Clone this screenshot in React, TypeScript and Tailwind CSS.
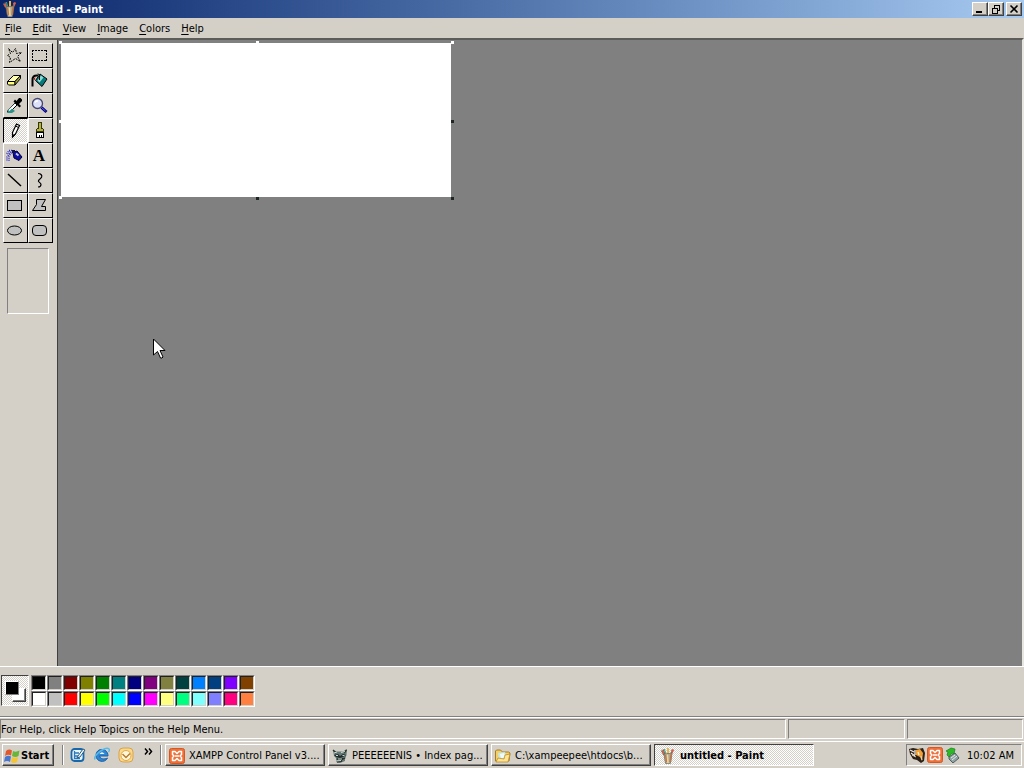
import type { ReactNode } from 'react';

const raised =
  'border border-t-white border-l-white border-r-[#404040] border-b-[#404040] shadow-[inset_-1px_-1px_0_#808080]';
const sunken = 'border border-t-[#808080] border-l-[#808080] border-r-white border-b-white';
const dither =
  'bg-[repeating-conic-gradient(#ffffff_0_25%,#d4d0c8_0_50%)] bg-[length:2px_2px]';

function Glyph({ size = 16, children }: { size?: number; children: ReactNode }) {
  return (
    <svg width={size} height={size} viewBox={`0 0 ${size} ${size}`} className="shrink-0" aria-hidden="true">
      {children}
    </svg>
  );
}

function PaintIcon() {
  return (
    <Glyph>
      <path d="M4 7 1.500 2.500M3 1.500 5.500 8M8 8V1M10 8l3-6" fill="none" stroke="#7c6a58" strokeWidth="1.500" />
      <path d="M2 3h2v3H3zM11 2l2-1 1 1-2 4z" fill="#d8604c" />
      <path d="M7 0h2v6H7z" fill="#e8b84c" />
      <path d="M4 1h1l1 4-1 1z" fill="#4aa08c" />
      <path d="M4 6l8-1-1 8-1 3H6l-1-3z" fill="#b0a890" stroke="#6c6454" strokeWidth="0.700" />
      <path d="M5.500 7l1 7M11 6l-1 8" stroke="#c87444" strokeWidth="1.300" />
      <path d="M7.500 6.500 8 15" stroke="#e8d8a0" strokeWidth="1.500" />
    </Glyph>
  );
}

const black = { fill: 'none', stroke: '#000', strokeWidth: 1 };

const tools: { name: string; icon: ReactNode }[] = [
  {
    name: 'Free-Form Select',
    icon: <path d="M2.500 1.500l4 4 3-4 1 5 5-1-4 4 3 5-5-3-6 4 1-5-3-2 3-2z" {...black} strokeDasharray="2 1" />,
  },
  {
    name: 'Select',
    icon: <path d="M1 3.500h15M1 13.500h15M1.500 3v11M15.500 3v11" {...black} strokeDasharray="2 1" shapeRendering="crispEdges" />,
  },
  {
    name: 'Eraser',
    icon: (
      <g stroke="#000" strokeLinejoin="round">
        <path d="M1.500 9.500 7.500 3.500h7L9 9.500z" fill="#ffffb0" />
        <path d="M1.500 9.500H9V13H2.500L1.500 12z" fill="#ffff80" />
        <path d="M9 9.500l5.500-6v3L9 13z" fill="#aaa640" />
      </g>
    ),
  },
  {
    name: 'Fill With Color',
    icon: (
      <g>
        <path d="M4.500 8.500 9 2l7 5-5 7.500z" fill="#067b7b" stroke="#000" />
        <path d="M6.500 8.500l3.500-5 2.500 2-4 5z" fill="#8dd9d3" />
        <path d="M8.500 8V3.500L7 1.500" fill="none" stroke="#000" />
        <path d="M7 3.500C3 3 1 5 1.500 9v5.500" fill="none" stroke="#000" strokeWidth="2" />
        <path d="M4 5.500 3 8" stroke="#a80000" />
      </g>
    ),
  },
  {
    name: 'Pick Color',
    icon: (
      <g>
        <path d="M2 13.500 9 6l2 2-7 7H1.500z" fill="#e8ffff" stroke="#000" />
        <path d="M1 16l2-4 2-1 4 3-3 2z" fill="#2c9088" />
        <path d="M3 13.500 9.500 7" stroke="#fff" strokeWidth="1.500" />
        <path d="M7.500 4.500l6 6 1.500-1.500-2-2L16 4V2.500L14.500 1H13l-2.500 3-1.500-1.500z" fill="#000" />
      </g>
    ),
  },
  {
    name: 'Magnifier',
    icon: (
      <g>
        <circle cx="6.500" cy="6.500" r="5" fill="#dce0f8" stroke="#444470" strokeWidth="1.300" />
        <path d="M4 5.500 5.500 4H7" fill="none" stroke="#fff" strokeWidth="1.500" />
        <path d="M10.500 10.500l5 4.500" stroke="#000080" strokeWidth="3" />
        <path d="M10.500 10.500l4 3.500" stroke="#6868f4" />
      </g>
    ),
  },
  {
    name: 'Pencil',
    icon: (
      <g>
        <path d="M6.500 10.500 10.500 2l3 1.500-4 8.500-3 3z" fill="#fff" stroke="#000" strokeWidth="1.200" />
        <path d="M9.500 4l3 1.500M6.500 10v5l3-3" fill="none" stroke="#000" />
        <path d="M6 12v4l3-3z" fill="#000" />
      </g>
    ),
  },
  {
    name: 'Brush',
    icon: (
      <g shapeRendering="crispEdges">
        <path d="M7 0h4v6h1v1h1v3H5V7h1V6h1z" fill="#34340c" />
        <path d="M8 1h2v6h2v2H6V7h2z" fill="#b4b43c" />
        <path d="M5 10h8v6H5z" fill="#000" />
        <path d="M6 11h6v4h-1v-2h-1v2H9v-2H8v2H6z" fill="#fff" />
      </g>
    ),
  },
  {
    name: 'Airbrush',
    icon: (
      <g>
        <path d="M7 5.500 11 4l5 6-3 3.500-5-2.500z" fill="#1010a0" stroke="#000040" />
        <path d="M10 6.500l2.500 2" stroke="#c4ccff" strokeWidth="1.800" />
        <path d="M6 3h3v3H6z" fill="#151550" />
        <path d="M6 3.500H3L.5 7M5.500 5.500 3 9v5M4.500 4.500 1 10v4" fill="none" stroke="#3030c8" strokeDasharray="1 1" strokeWidth="1.500" />
      </g>
    ),
  },
  {
    name: 'Text',
    icon: (
      <text x="8" y="14" textAnchor="middle" className="font-['Liberation_Serif',serif] text-[17px] font-bold">
        A
      </text>
    ),
  },
  { name: 'Line', icon: <path d="M2 2l13 12" {...black} strokeWidth={1.5} /> },
  {
    name: 'Curve',
    icon: <path d="M7 1.500c3 0 4.500 2 3.500 4L7.500 8.500c-1 1.500 2.500 2 2.500 4s-1 2.500-3 2.500" {...black} strokeWidth={1.2} />,
  },
  { name: 'Rectangle', icon: <path d="M1.500 3.500h14v10h-14z" {...black} fill="#c0c0c0" shapeRendering="crispEdges" /> },
  { name: 'Polygon', icon: <path d="M5.500 2.500h9L10.500 9.500h4v4H1.500L5.500 7.500z" {...black} fill="#c0c0c0" /> },
  { name: 'Ellipse', icon: <ellipse cx="8.500" cy="8.500" rx="7" ry="4.500" {...black} fill="#c0c0c0" /> },
  { name: 'Rounded Rectangle', icon: <rect x="1.500" y="3.500" width="14" height="10" rx="3.500" {...black} fill="#c0c0c0" /> },
];

const swatches = [
  ['bg-black', 'bg-[#808080]', 'bg-[#800000]', 'bg-[#808000]', 'bg-[#008000]', 'bg-[#008080]', 'bg-[#000080]', 'bg-[#800080]', 'bg-[#808040]', 'bg-[#004040]', 'bg-[#0080ff]', 'bg-[#004080]', 'bg-[#8000ff]', 'bg-[#804000]'],
  ['bg-white', 'bg-[#c0c0c0]', 'bg-[#ff0000]', 'bg-[#ffff00]', 'bg-[#00ff00]', 'bg-[#00ffff]', 'bg-[#0000ff]', 'bg-[#ff00ff]', 'bg-[#ffff80]', 'bg-[#00ff80]', 'bg-[#80ffff]', 'bg-[#8080ff]', 'bg-[#ff0080]', 'bg-[#ff8040]'],
];

const handles = [
  '-left-0.5 -top-0.5 bg-white',
  'left-1/2 -top-0.5 bg-white',
  '-right-[3px] -top-0.5 bg-white',
  '-left-0.5 top-1/2 bg-white',
  '-right-[3px] top-1/2 bg-[#1c2424]',
  '-left-0.5 -bottom-0.5 bg-white',
  'left-1/2 -bottom-[3px] bg-[#1c2424]',
  '-right-[3px] -bottom-[3px] bg-[#1c2424]',
];

function XamppIcon() {
  return (
    <Glyph>
      <rect x=".5" y=".5" width="15" height="15" rx="2" fill="#f0703a" stroke="#d45820" />
      <path
        d="M4 3.500h2l2 2 2-2h2.500v3L11 8l1.500 1.500v3H10l-2-2-2 2H3.500v-3L5 8 3.500 6.500v-3zM6 8h4"
        fill="none"
        stroke="#fff"
        strokeWidth="1.500"
        strokeLinejoin="round"
      />
    </Glyph>
  );
}

function RaccoonIcon() {
  return (
    <Glyph>
      <path d="M1 2l4 1.500h6L15 1l-.5 6-1.500 4v2l-5 2-4-1v-4L2 8z" fill="#647876" />
      <path d="M1 2l3 3M14.500 2 12 5M5 11l4 1 4-2M5 14l5-1" stroke="#26332f" strokeWidth="1.300" />
      <path d="M2 7l4-1 2 2 3-2 3 1-3 2-3 1-4-1z" fill="#202c2a" />
      <path d="M4 7.500h2M10.500 7.500h2M2 5l3-1M9 4.500l4-1M6 11h4M4 13l5-.5" stroke="#cbd9d3" />
    </Glyph>
  );
}

function FolderIcon() {
  return (
    <Glyph>
      <path d="M.5 13V3l1-1h4l2 2h6l1.500 1-1 8z" fill="#f3cf65" stroke="#a87c22" />
      <path d="M3 5l7-1 2 8H4z" fill="#c4e8e8" />
      <path d="M5 6l4-1 1 4-4 2z" fill="#f0fbf7" />
      <path d="M1 14 3 10l6 1 1-4 5-1-2 8z" fill="#ffe391" stroke="#ba8b2a" strokeWidth=".8" />
    </Glyph>
  );
}

const tasks = [
  { title: 'XAMPP Control Panel v3....', icon: <XamppIcon />, active: false },
  { title: 'PEEEEEENIS • Index pag...', icon: <RaccoonIcon />, active: false },
  { title: 'C:\\xampeepee\\htdocs\\b...', icon: <FolderIcon />, active: false },
  { title: 'untitled - Paint', icon: <PaintIcon />, active: true },
];

function TitleBar() {
  const button = `flex h-3.5 w-4 items-center justify-center bg-[#d4d0c8] ${raised}`;
  return (
    <header className="flex h-[18px] items-center bg-linear-to-r from-[#0a246a] to-[#a6caf0] px-0.5 text-white">
      <PaintIcon />
      <h1 className="ml-px grow pt-px font-bold">untitled - Paint</h1>
      <button aria-label="Minimize" className={button}>
        <Glyph size={10}><path d="M1 8h6" stroke="#000" strokeWidth="2" /></Glyph>
      </button>
      <button aria-label="Restore" className={button}>
        <Glyph size={10}>
          <path d="M3 1.500h6M3.500 1v3M8.500 1v5.500H6M1 4.500h6M1.500 4v5h5V4" {...black} shapeRendering="crispEdges" />
          <path d="M3 1h6M1 4h6" {...black} shapeRendering="crispEdges" />
        </Glyph>
      </button>
      <button aria-label="Close" className={`${button} ml-0.5`}>
        <Glyph size={10}><path d="M1.500 1.500l7 7M8.500 1.500l-7 7" stroke="#000" strokeWidth="1.600" /></Glyph>
      </button>
    </header>
  );
}

function MenuBar() {
  return (
    <nav className="flex h-5 items-center gap-[11px] pt-0.5 pl-[5px]">
      {['File', 'Edit', 'View', 'Image', 'Colors', 'Help'].map((item) => (
        <button key={item}>
          <span className="underline underline-offset-2">{item[0]}</span>
          {item.slice(1)}
        </button>
      ))}
    </nav>
  );
}

function ToolBox() {
  return (
    <aside className="w-[57px] shrink-0 pt-[3px] pl-[3px]">
      <div className="grid w-[50px] grid-cols-2">
        {tools.map(({ name, icon }) => (
          <button
            key={name}
            aria-label={name}
            className={
              name === 'Pencil'
                ? `flex h-[25px] items-center border border-t-black border-l-black border-r-white border-b-white pl-0.5 ${dither}`
                : 'flex h-[25px] items-center border border-t-white border-l-white border-r-black border-b-black pl-0.5'
            }
          >
            <Glyph size={17}>{icon}</Glyph>
          </button>
        ))}
      </div>
      <div className={`mt-[5px] ml-1 h-[66px] w-[42px] ${sunken}`} />
    </aside>
  );
}

function Workspace() {
  return (
    <main className="relative grow border-l border-[#404040] bg-[#808080] pt-[3px] pl-[3px]">
      <div className="relative h-[154px] w-[390px] bg-white">
        {handles.map((place) => (
          <span key={place} className={`absolute size-[3px] ${place}`} />
        ))}
      </div>
      <svg width="13" height="22" viewBox="0 0 13 22" className="absolute top-[298px] left-[95px]" aria-hidden="true">
        <path d="M.5 1v16l4-3.500L7.500 20h1.500l1-1L7 12.500h5z" fill="#fff" stroke="#000" />
      </svg>
    </main>
  );
}

function Palette() {
  return (
    <section aria-label="Colors" className="flex h-[50px] gap-0.5 border-t border-white pt-2 pl-px">
      <div className={`relative h-[31px] w-7 border border-t-[#404040] border-l-[#404040] border-r-white border-b-white ${dither}`}>
        <span className={`absolute top-3 left-2.5 size-3.5 bg-white ${raised}`} />
        <span className="absolute top-[5px] left-[3px] size-3.5 border border-t-white border-l-white border-r-[#808080] border-b-[#808080] bg-black" />
      </div>
      <div className="flex flex-col">
        {swatches.map((row, r) => (
          <div key={r} className="flex">
            {row.map((color) => (
              <button key={color} aria-label={color.slice(3)} className="size-4 border border-t-[#808080] border-l-[#808080] border-r-white border-b-white">
                <span className={`block size-3.5 border border-t-[#202020] border-l-[#202020] border-r-[#d4d0c8] border-b-[#d4d0c8] ${color}`} />
              </button>
            ))}
          </div>
        ))}
      </div>
    </section>
  );
}

function StatusBar() {
  return (
    <footer className="flex h-6 gap-0.5 border-t border-white pt-px pr-px pb-0.5">
      <p className={`flex grow items-center pt-0.5 ${sunken}`}>For Help, click Help Topics on the Help Menu.</p>
      <p className={`w-[117px] ${sunken}`} />
      <p className={`w-[116px] ${sunken}`} />
    </footer>
  );
}

function Divider() {
  return <span className="h-5 w-0.5 border-l border-l-[#808080] border-r border-r-white" />;
}

function TaskBar() {
  return (
    <nav aria-label="Taskbar" className="flex h-[27px] items-center border-t border-white px-0.5">
      <button className={`flex h-[22px] w-[52px] items-center gap-px pt-px pl-px font-bold ${raised}`}>
        <Glyph>
          <path d="M2 3q3-2.500 6-.5L7 7.500q-3-1.500-6 .5z" fill="#e0582c" />
          <path d="M9 3q3 1.500 6.500-.5L14.500 8q-3 2-6.500 0z" fill="#69b53c" />
          <path d="M1 9q3-2 6-.5l-1 5.500q-3-2-6 0z" fill="#4976d0" />
          <path d="M8 9q3 1.500 6 0l-1 5q-3 2-6 0z" fill="#f4c435" />
        </Glyph>
        Start
      </button>
      <div className="ml-2 flex w-[98px] items-center gap-2">
        <Divider />
        <button aria-label="Show Desktop" className="-ml-0.5">
          <Glyph>
            <rect x="1.500" y="2" width="12" height="12" rx="3" fill="#eaf5fc" stroke="#1868ab" strokeWidth="1.800" />
            <path d="M4 6h5M4 9h5M4 11.500h6M4.500 4v8" fill="none" stroke="#2d79b8" strokeWidth="1.300" />
            <path d="M8 9l5-7 2 1-5 7-3 1z" fill="#f0f8fb" stroke="#285d83" />
          </Glyph>
        </button>
        <button aria-label="Internet Explorer">
          <Glyph>
            <path d="M14 9H5.500c1 3.500 5 3.500 8 2C11 16.500 2 15 2 8.500 2 3 7 1.500 10.500 3 13.500 4.500 14 7 14 9z" fill="#2f86d2" stroke="#1761ad" />
            <path d="M5.500 7q2.500-3.500 5 0z" fill="#eaf8ff" />
            <path d="M1 12.500C-1 8 12-1 15 2q1 1-.5 3" fill="none" stroke="#58b8e8" strokeWidth="1.500" />
          </Glyph>
        </button>
        <button aria-label="Outlook">
          <Glyph>
            <rect x="1" y="1" width="14" height="14" rx="4" fill="#f9d98b" stroke="#d9a34a" />
            <circle cx="8" cy="8.500" r="5" fill="#fff7dc" stroke="#e3a84a" />
            <path d="M4.500 7 8 10.500l4-4" fill="none" stroke="#b77b24" strokeWidth="1.400" />
          </Glyph>
        </button>
        <button aria-label="More quick launch items" className="-mt-2 ml-0.5">
          <Glyph size={9}><path d="M1 1.500l2.500 3L1 7.500M5 1.500l2.500 3L5 7.500" {...black} strokeWidth={1.5} /></Glyph>
        </button>
      </div>
      <Divider />
      <div className="ml-[3px] flex min-w-0 grow gap-[3px]">
        {tasks.map(({ title, icon, active }) => (
          <button
            key={title}
            className={`flex h-[22px] w-40 items-center gap-1 pt-px whitespace-nowrap ${
              active
                ? `border border-t-[#404040] border-l-[#404040] border-r-white border-b-white pl-[5px] font-bold ${dither}`
                : `pl-[3px] ${raised}`
            }`}
          >
            {icon}
            {title}
          </button>
        ))}
      </div>
      <div className={`flex h-[22px] w-[116px] items-center gap-0.5 pl-0.5 ${sunken}`}>
        <Glyph>
          <path d="M0 2l4-1 5 1 5-1 2 5-1 8-3 2-4-3-4-1-3-5z" fill="#2c2018" />
          <path d="M7 3l4-1 3 4-1 8-2-4-4-2z" fill="#f0a034" />
          <path d="M1 3l4 2M2 6l4 3M9 5l1 3M6 3v5" stroke="#f8f0e4" strokeWidth="1.300" />
          <path d="M3 8l4 2M12 9l1 4" stroke="#e8d8c0" />
        </Glyph>
        <XamppIcon />
        <Glyph>
          <path d="M4 10l6-4 4 5-6 5-4-4z" fill="#93a3a4" stroke="#4f5f61" />
          <path d="M6 11l4-3M7 13l5-4" stroke="#e3eded" />
          <path d="M1 4l5-3 4 1-1 5-2-1-3 4-2-2 1-3z" fill="#2dba26" stroke="#167f18" strokeWidth=".7" />
        </Glyph>
        <time className="ml-1 pt-px whitespace-nowrap">10:02 AM</time>
      </div>
    </nav>
  );
}

export default function App() {
  return (
    <div className="flex min-h-screen flex-col bg-[#d4d0c8] font-['DejaVu_Sans_Condensed','Noto_Sans',sans-serif] text-[11px] leading-4 text-black">
      <TitleBar />
      <MenuBar />
      <div className="flex grow border-t-2 border-r-2 border-t-[#5c5c58] border-r-[#e8e6e0]">
        <ToolBox />
        <Workspace />
      </div>
      <Palette />
      <div className="border-t border-[#808080]" />
      <StatusBar />
      <TaskBar />
    </div>
  );
}
